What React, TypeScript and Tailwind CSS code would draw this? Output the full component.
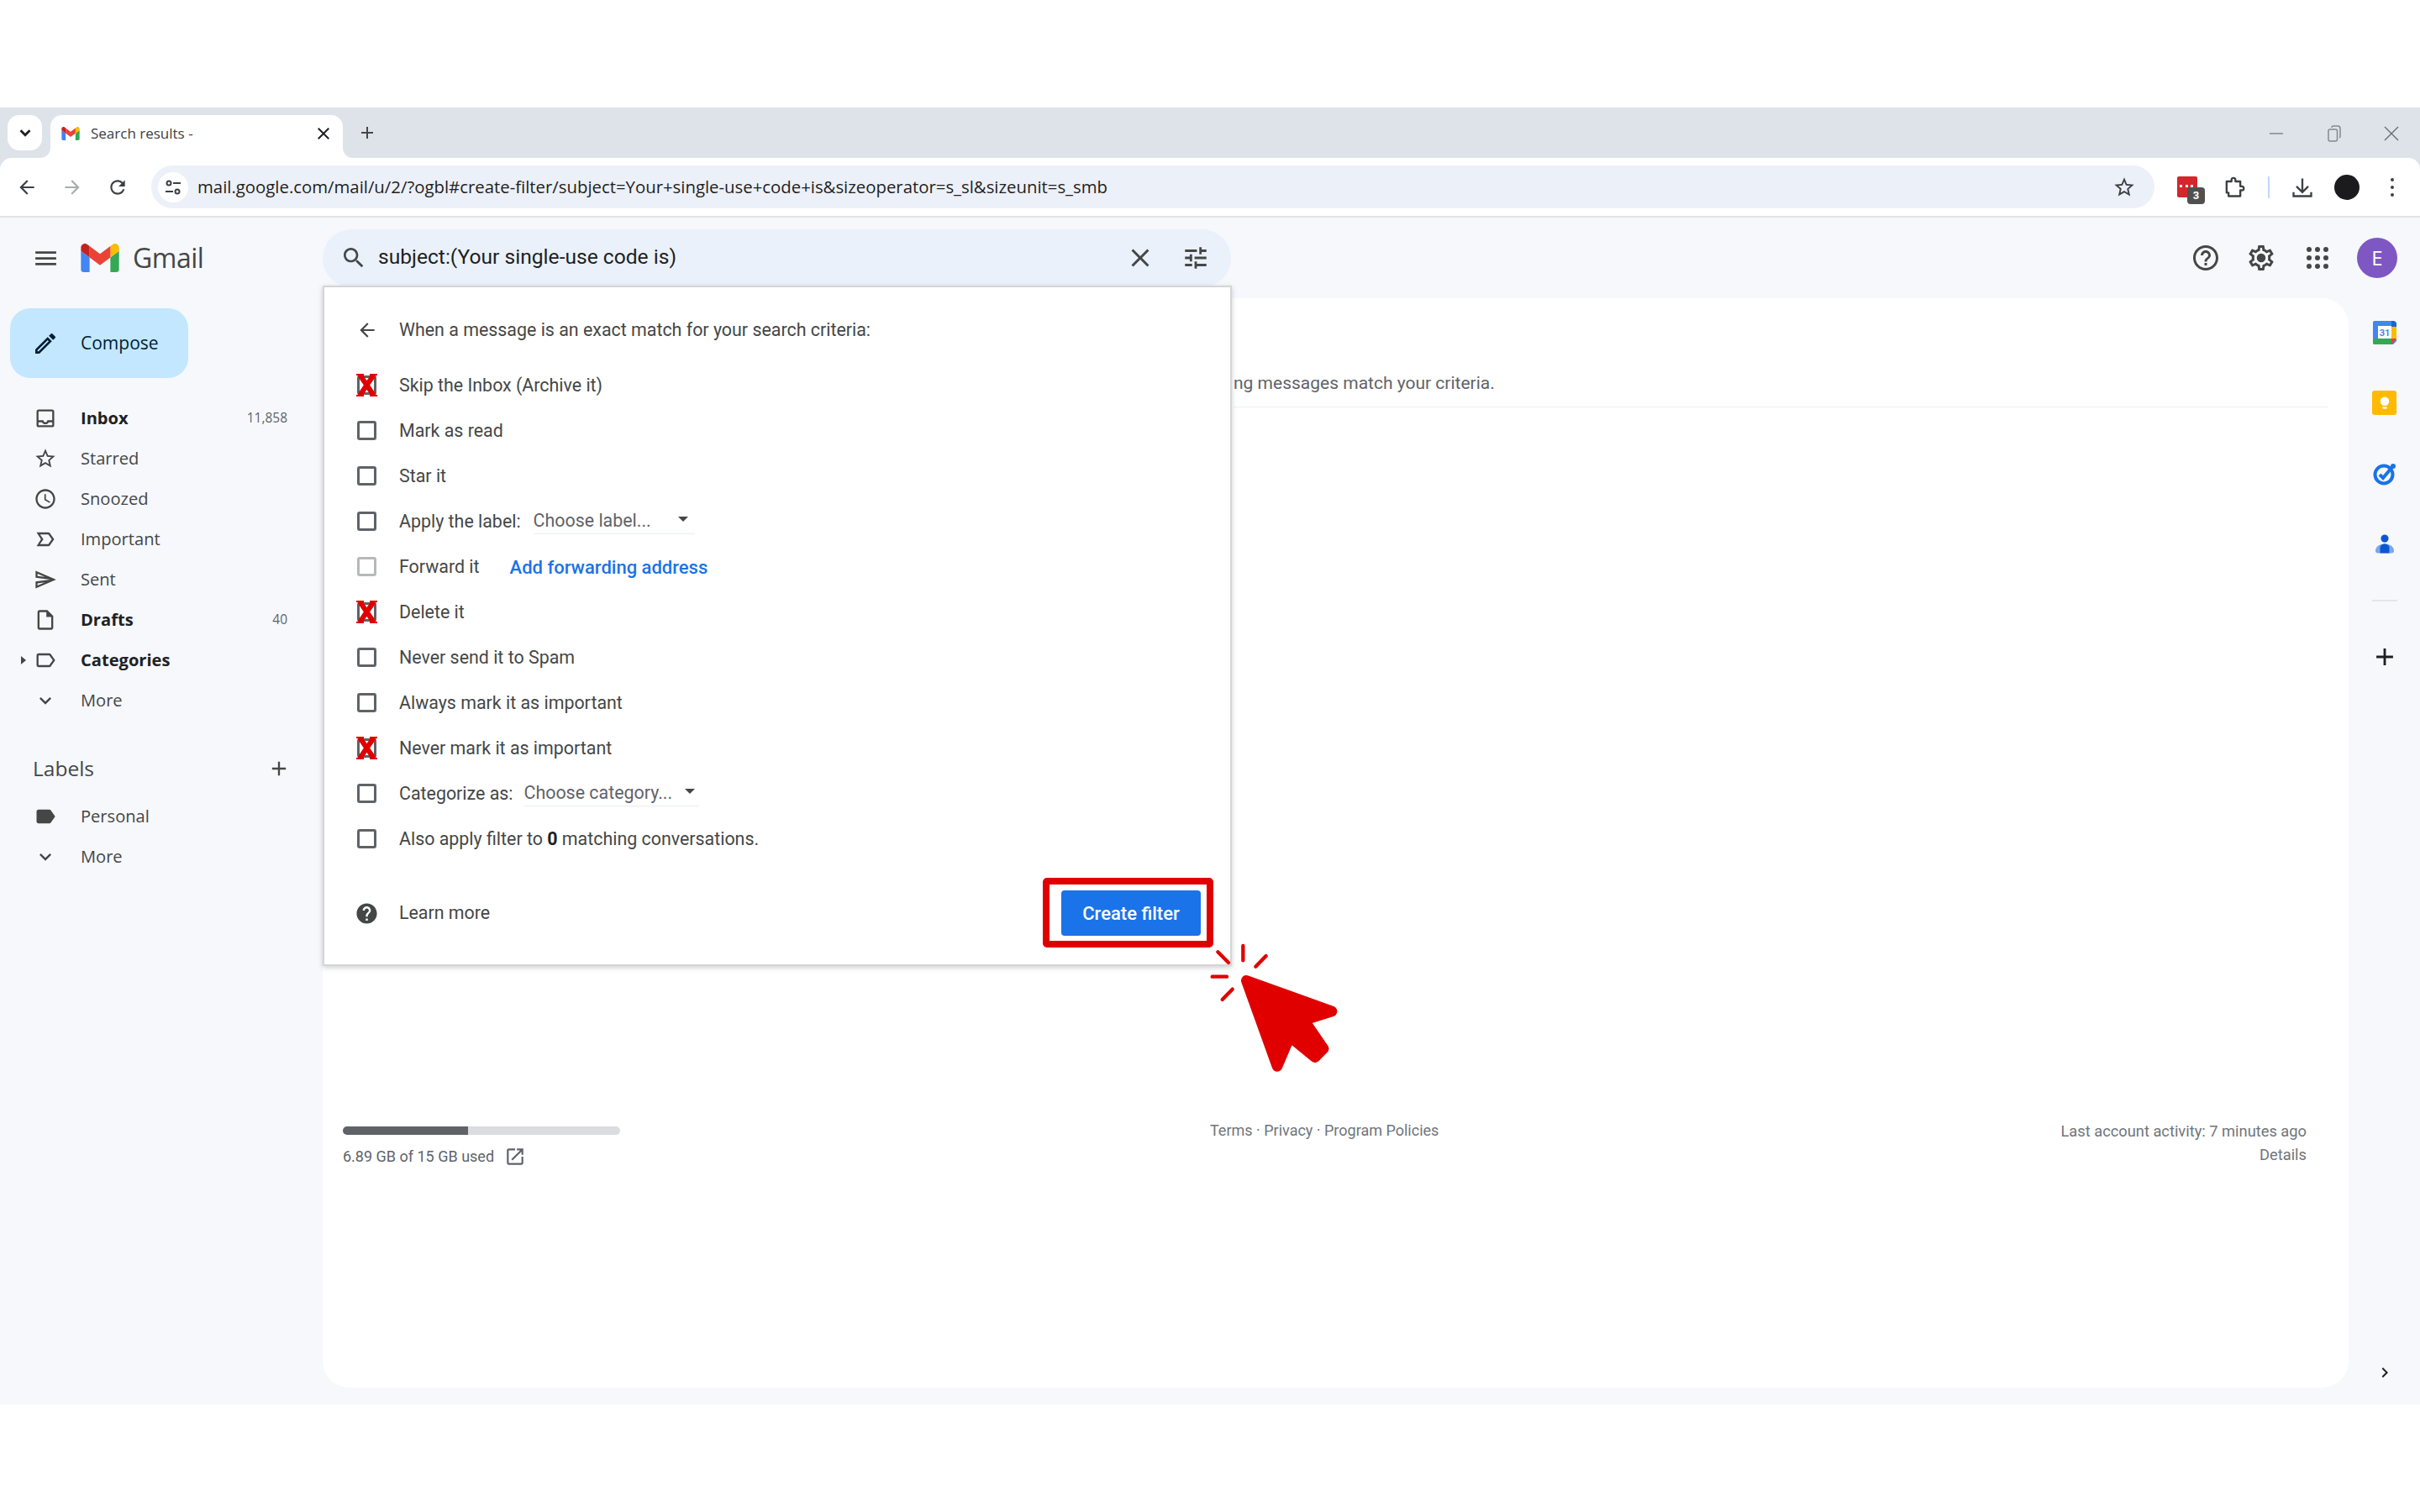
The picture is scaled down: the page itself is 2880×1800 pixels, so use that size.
import React from "react";

const P: Record<string, string> = {
  menu: "M3 18h18v-2H3v2zm0-5h18v-2H3v2zm0-7v2h18V6H3z",
  search: "M15.5 14h-.79l-.28-.27C15.41 12.59 16 11.11 16 9.5 16 5.91 13.09 3 9.5 3S3 5.91 3 9.5 5.91 16 9.5 16c1.61 0 3.09-.59 4.23-1.57l.27.28v.79l5 4.99L20.49 19l-4.99-5zm-6 0C7.01 14 5 11.99 5 9.5S7.01 5 9.5 5 14 7.01 14 9.5 11.99 14 9.5 14z",
  close: "M19 6.41L17.59 5 12 10.59 6.41 5 5 6.41 10.59 12 5 17.59 6.41 19 12 13.41 17.59 19 19 17.59 13.41 12z",
  tune: "M3 17v2h6v-2H3zM3 5v2h10V5H3zm10 16v-2h8v-2h-8v-2h-2v6h2zM7 9v2H3v2h4v2h2V9H7zm14 4v-2H11v2h10zm-6-4h2V7h4V5h-4V3h-2v6z",
  back: "M20 11H7.83l5.59-5.59L12 4l-8 8 8 8 1.41-1.41L7.83 13H20v-2z",
  forward: "M12 4l-1.41 1.41L16.17 11H4v2h12.17l-5.58 5.59L12 20l8-8z",
  refresh: "M17.65 6.35C16.2 4.9 14.21 4 12 4c-4.42 0-7.99 3.58-7.99 8s3.57 8 7.99 8c3.73 0 6.84-2.55 7.73-6h-2.08c-.82 2.33-3.04 4-5.65 4-3.31 0-6-2.69-6-6s2.69-6 6-6c1.66 0 3.14.69 4.22 1.78L13 11h7V4l-2.35 2.35z",
  star: "M22 9.24l-7.19-.62L12 2 9.19 8.63 2 9.24l5.46 4.73L5.82 21 12 17.27 18.18 21l-1.63-7.03L22 9.24zM12 15.4l-3.76 2.27 1-4.28-3.32-2.88 4.38-.38L12 6.1l1.71 4.04 4.38.38-3.32 2.88 1 4.28L12 15.4z",
  help: "M11 18h2v-2h-2v2zm1-16C6.48 2 2 6.48 2 12s4.48 10 10 10 10-4.48 10-10S17.52 2 12 2zm0 18c-4.41 0-8-3.59-8-8s3.59-8 8-8 8 3.59 8 8-3.59 8-8 8zm0-14c-2.21 0-4 1.79-4 4h2c0-1.1.9-2 2-2s2 .9 2 2c0 2-3 1.75-3 5h2c0-2.25 3-2.5 3-5 0-2.21-1.79-4-4-4z",
  gear: "M19.43 12.98c.04-.32.07-.64.07-.98 0-.34-.03-.66-.07-.98l2.11-1.65c.19-.15.24-.42.12-.64l-2-3.46c-.09-.16-.26-.25-.44-.25-.06 0-.12.01-.17.03l-2.49 1c-.52-.4-1.08-.73-1.69-.98l-.38-2.65C14.46 2.18 14.25 2 14 2h-4c-.25 0-.46.18-.49.42l-.38 2.65c-.61.25-1.17.59-1.69.98l-2.49-1c-.06-.02-.12-.03-.18-.03-.17 0-.34.09-.43.25l-2 3.46c-.13.22-.07.49.12.64l2.11 1.65c-.04.32-.07.65-.07.98 0 .33.03.66.07.98l-2.11 1.65c-.19.15-.24.42-.12.64l2 3.46c.09.16.26.25.44.25.06 0 .12-.01.17-.03l2.49-1c.52.4 1.08.73 1.69.98l.38 2.65c.03.24.24.42.49.42h4c.25 0 .46-.18.49-.42l.38-2.65c.61-.25 1.17-.59 1.69-.98l2.49 1c.06.02.12.03.18.03.17 0 .34-.09.43-.25l2-3.46c.12-.22.07-.49-.12-.64l-2.11-1.65zm-1.98-1.71c.04.31.05.52.05.73 0 .21-.02.43-.05.73l-.14 1.13.89.7 1.08.84-.7 1.21-1.27-.51-1.04-.42-.9.68c-.43.32-.84.56-1.25.73l-1.06.43-.16 1.13-.2 1.35h-1.4l-.19-1.35-.16-1.13-1.06-.43c-.43-.18-.83-.41-1.23-.71l-.91-.7-1.06.43-1.27.51-.7-1.21 1.08-.84.89-.7-.14-1.13c-.03-.31-.05-.54-.05-.74s.02-.43.05-.73l.14-1.13-.89-.7-1.08-.84.7-1.21 1.27.51 1.04.42.9-.68c.43-.32.84-.56 1.25-.73l1.06-.43.16-1.13.2-1.35h1.39l.19 1.35.16 1.13 1.06.43c.43.18.83.41 1.23.71l.91.7 1.06-.43 1.27-.51.7 1.21-1.07.85-.89.7.14 1.13zM12 8.5a3.5 3.5 0 1 0 0 7 3.5 3.5 0 0 0 0-7z",
  inbox: "M19 3H5c-1.1 0-2 .9-2 2v14c0 1.1.9 2 2 2h14c1.1 0 2-.9 2-2V5c0-1.1-.9-2-2-2zm0 16H5v-3h3.56c.69 1.19 1.97 2 3.45 2s2.75-.81 3.45-2H19v3zm0-5h-4.99c0 1.1-.9 2-2 2s-2-.9-2-2H5V5h14v9z",
  clock: "M11.99 2C6.47 2 2 6.48 2 12s4.47 10 9.99 10C17.52 22 22 17.52 22 12S17.52 2 11.99 2zM12 20c-4.42 0-8-3.58-8-8s3.58-8 8-8 8 3.58 8 8-3.58 8-8 8zm.5-13H11v6l5.25 3.15.75-1.23-4.5-2.67z",
  important: "M15 19H3l4.5-7L3 5h12c.65 0 1.26.31 1.63.84L21 12l-4.37 6.16c-.37.52-.98.84-1.63.84zm-8.5-2H15l3.5-5L15 7H6.5l3.5 5-3.5 5z",
  send: "M4.01 6.03l7.51 3.22-7.52-1 .01-2.22m7.5 8.72L4 17.97v-2.22l7.51-1M2.01 3L2 10l15 2-15 2 .01 7L23 12 2.01 3z",
  draft: "M14 2H6c-1.1 0-1.99.9-1.99 2L4 20c0 1.1.89 2 1.99 2H18c1.1 0 2-.9 2-2V8l-6-6zM6 20V4h7v5h5v11H6z",
  label: "M17.63 5.84C17.27 5.33 16.67 5 16 5L5 5.01C3.9 5.01 3 5.9 3 7v10c0 1.1.9 1.99 2 1.99L16 19c.67 0 1.27-.33 1.63-.84L22 12l-4.37-6.16zM16 17H5V7h11l3.55 5L16 17z",
  labelFill: "M17.63 5.84C17.27 5.33 16.67 5 16 5L5 5.01C3.9 5.01 3 5.9 3 7v10c0 1.1.9 1.99 2 1.99L16 19c.67 0 1.27-.33 1.63-.84L22 12l-4.37-6.16z",
  more: "M16.59 8.59L12 13.17 7.41 8.59 6 10l6 6 6-6z",
  open: "M19 19H5V5h7V3H5c-1.11 0-2 .9-2 2v14c0 1.1.89 2 2 2h14c1.1 0 2-.9 2-2v-7h-2v7zM14 3v2h3.59l-9.83 9.83 1.41 1.41L19 6.41V10h2V3h-7z",
  helpFill: "M12 2C6.48 2 2 6.48 2 12s4.48 10 10 10 10-4.48 10-10S17.52 2 12 2zm1 17h-2v-2h2v2zm2.07-7.75l-.9.92C13.45 12.9 13 13.5 13 15h-2v-.5c0-1.1.45-2.1 1.17-2.83l1.24-1.26c.37-.36.59-.86.59-1.41 0-1.1-.9-2-2-2s-2 .9-2 2H8c0-2.21 1.79-4 4-4s4 1.79 4 4c0 .88-.36 1.68-.93 2.25z",
  edit: "M14.06 9.02l.92.92L5.92 19H5v-.92l9.06-9.06M17.66 3c-.25 0-.51.1-.7.29l-1.83 1.83 3.75 3.75 1.83-1.83c.39-.39.39-1.02 0-1.41l-2.34-2.34c-.2-.2-.45-.29-.71-.29zm-3.6 3.19L3 17.25V21h3.75L17.81 9.94l-3.75-3.75z",
  plus: "M19 13h-6v6h-2v-6H5v-2h6V5h2v6h6v2z",
  chevR: "M8.59 16.59L13.17 12 8.59 7.41 10 6l6 6-6 6z",
};

function I({ n, s = 24, c = "text-[#444746]" }: { n: string; s?: number; c?: string }) {
  return (
    <svg viewBox="0 0 24 24" width={s} height={s} className={`shrink-0 fill-current ${c}`}>
      <path d={P[n]} />
    </svg>
  );
}

function GmailM({ w, h }: { w: number; h: number }) {
  return (
    <svg viewBox="52 42 88 66" width={w} height={h} className="shrink-0">
      <path fill="#4285f4" d="M58 108h14V74L52 59v43c0 3.32 2.69 6 6 6" />
      <path fill="#34a853" d="M120 108h14c3.32 0 6-2.69 6-6V59l-20 15" />
      <path fill="#fbbc04" d="M120 48v26l20-15v-8c0-7.42-8.47-11.65-14.4-7.2" />
      <path fill="#ea4335" d="M72 74V48l24 18 24-18v26L96 92" />
      <path fill="#c5221f" d="M52 51v8l20 15V48l-5.6-4.2c-5.94-4.45-14.4-.22-14.4 7.2" />
    </svg>
  );
}

function Nav({ icon, text, bold, count, caret, gray }: { icon: string; text: string; bold?: boolean; count?: string; caret?: boolean; gray?: boolean }) {
  return (
    <div className="relative flex h-[48px] w-[342px] items-center [font-family:'Open_Sans',sans-serif] text-[#444746]">
      {caret && <span className="absolute left-[25px] top-[19px] h-0 w-0 border-y-[5px] border-l-[6px] border-y-transparent border-l-[#444746]" />}
      <span className="flex w-[96px] justify-center pl-[12px]">
        <I n={icon} s={gray ? 26 : 28} />
      </span>
      <span className={`flex-1 text-[20.1px] ${bold ? "font-bold text-[#202124]" : ""}`}>{text}</span>
      {count && <span className="text-[15.5px] text-[#5f6368]">{count}</span>}
    </div>
  );
}

function Box({ light }: { light?: boolean }) {
  return <span className={`block h-[23px] w-[23px] rounded-[3px] border-[3px] ${light ? "border-[#b6b8ba]" : "border-[#5f6368]"}`} />;
}

function XBox() {
  return (
    <span className="relative block h-[23px] w-[23px]">
      <span className="block h-[23px] w-[23px] rounded-[3px] border-[3px] border-[#5f6368]" />
      <svg viewBox="0 0 27 27" width={27} height={27} className="absolute -left-[2px] -top-[2px]" fill="none" stroke="#e00000">
        <path d="M5 1L22 26M22 1L5 26" strokeWidth="6" />
        <path d="M1 1h9M17 1h9M1 26h9M17 26h9" strokeWidth="2" />
      </svg>
    </span>
  );
}

function Row({ children, mark }: { children: React.ReactNode; mark?: React.ReactNode }) {
  return (
    <div className="flex h-[54px] items-center text-[21.4px] text-[#444746]">
      <span className="flex w-[50px] shrink-0 pb-[2px]">{mark ?? <Box />}</span>
      {children}
    </div>
  );
}

function Select({ w, text, ml, caretR }: { w: number; text: string; ml: number; caretR: number }) {
  return (
    <span className="relative flex h-[30px] items-center border-b border-[#e8eeee] text-[#5f6368]" style={{ width: w, marginLeft: ml }}>
      {text}
      <span className="absolute top-[9px] h-0 w-0 border-x-[6px] border-t-[6px] border-x-transparent border-t-[#444746]" style={{ right: caretR }} />
    </span>
  );
}

export default function App() {
  return (
    <div className="flex h-[1800px] w-[2880px] flex-col overflow-hidden bg-white [font-family:Roboto,sans-serif]">
      <div className="h-[128px]" />

      {/* tab strip */}
      <div className="flex h-[60px] items-end bg-[#dee3ea] pl-[9px]">
        <div className="mb-[9px] flex h-[42px] w-[41px] items-center justify-center rounded-[14px] bg-white">
          <svg viewBox="0 0 24 24" width={22} height={22} className="fill-none stroke-[#1f1f1f] stroke-[3]"><path d="M6 9l6 6 6-6" /></svg>
        </div>
        <div className="relative ml-[10px] flex h-[51px] w-[348px] items-center rounded-t-[14px] bg-white pb-[7px] pl-[13px]">
          <span className="absolute -left-[12px] bottom-0 h-[12px] w-[12px] bg-white"><span className="block h-full w-full rounded-br-[12px] bg-[#dee3ea]" /></span>
          <span className="absolute -right-[12px] bottom-0 h-[12px] w-[12px] bg-white"><span className="block h-full w-full rounded-bl-[12px] bg-[#dee3ea]" /></span>
          <GmailM w={22} h={16} />
          <span className="ml-[13px] flex-1 [font-family:'Open_Sans',sans-serif] text-[17px] text-[#3c4043]">Search results -</span>
          <span className="mr-[11px]"><I n="close" s={24} c="text-[#202124]" /></span>
        </div>
        <div className="ml-[17px] mb-[18px]"><I n="plus" s={24} c="text-[#444746]" /></div>
        <div className="mb-[19px] ml-auto flex items-center">
          <span className="block h-[2px] w-[16px] bg-[#9a9ea3]" />
          <span className="ml-[53px] block"><svg viewBox="0 0 16 20" width={16} height={20} className="fill-none stroke-[#85898e] stroke-[1.5]"><rect x="1" y="5" width="10.500" height="14" rx="2" /><path d="M5 3V3a2 2 0 0 1 2-2h5a3 3 0 0 1 3 3v9a2 2 0 0 1-1 2" /></svg></span>
          <span className="ml-[50px] mr-[24px] block"><svg viewBox="0 0 20 20" width={20} height={20} className="fill-none stroke-[#6a6e73] stroke-[1.4]"><path d="M2 2l16 16M18 2L2 18" /></svg></span>
        </div>
      </div>

      {/* toolbar */}
      <div className="bg-[#dee3ea]">
        <div className="flex h-[69px] items-center rounded-t-[14px] bg-white pl-[19px] pr-[19px]">
          <I n="back" s={26} c="text-[#3c4043]" />
          <span className="ml-[28px]"><I n="forward" s={26} c="text-[#a9acb0]" /></span>
          <span className="ml-[28px]"><I n="refresh" s={26} c="text-[#3c4043]" /></span>
          <div className="ml-[27px] flex h-[51px] w-[2384px] items-center rounded-full bg-[#ecf0f8] pl-[8px] pr-[22px]">
            <span className="flex h-[36px] w-[36px] items-center justify-center rounded-full bg-white">
              <svg viewBox="0 0 20 20" width={20} height={20} className="fill-none stroke-[#3c4043] stroke-[2]"><circle cx="5" cy="5" r="2.500" /><path d="M10 5h9M1 15h9" /><circle cx="15" cy="15" r="2.500" /></svg>
            </span>
            <span className="ml-[11px] flex-1 [font-family:'Open_Sans',sans-serif] text-[20.35px] text-[#1f1f1f]">mail.google.com/mail/u/2/?ogbl#create-filter/subject=Your+single-use+code+is&amp;sizeoperator=s_sl&amp;sizeunit=s_smb</span>
            <I n="star" s={28} c="text-[#3c4043]" />
          </div>
          <span className="relative ml-[27px] block h-[25px] w-[24px] rounded-[2px] bg-[#d3272b]">
            <span className="absolute left-[3px] top-[10px] block h-[4px] w-[16px] border-t-[3px] border-dotted border-white" />
            <span className="absolute -right-[9px] top-[13px] flex h-[20px] w-[21px] items-center justify-center rounded-[4px] bg-[#505050] text-[13px] font-bold text-white">3</span>
          </span>
          <span className="ml-[29px]">
            <svg viewBox="0 0 24 24" width={28} height={28} className="fill-none stroke-[#3c4043] stroke-[2] [stroke-linejoin:round]"><path d="M5 6h5V4.500a2 2 0 0 1 4 0V6h5v5h1.500a2 2 0 0 1 0 4H19v6H7v-3.500L5 17.500z" /></svg>
          </span>
          <span className="ml-[27px] block h-[26px] w-[2px] bg-[#c4d7f5]" />
          <span className="ml-[25px]">
            <svg viewBox="0 0 24 24" width={28} height={28} className="fill-none stroke-[#3c4043] stroke-[2]"><path d="M12 3v14M6 11l6 6 6-6M3 17v4h18v-4" /></svg>
          </span>
          <span className="ml-[24px] block h-[30px] w-[30px] rounded-full bg-[#1b1b1d]" />
          <span className="ml-[37px] flex flex-col gap-[5px]">
            <span className="block h-[4px] w-[4px] rounded-full bg-[#3c4043]" />
            <span className="block h-[4px] w-[4px] rounded-full bg-[#3c4043]" />
            <span className="block h-[4px] w-[4px] rounded-full bg-[#3c4043]" />
          </span>
        </div>
      </div>
      <div className="h-[2px] bg-[#e3e3e3]" />

      {/* gmail page */}
      <div className="relative h-[1413px] bg-[#f6f8fc]">
        {/* header */}
        <div className="flex h-[96px] items-center">
          <span className="ml-[38px]"><I n="menu" s={33} c="text-[#444746]" /></span>
          <span className="ml-[25px]"><GmailM w={46} h={34} /></span>
          <span className="ml-[16px] w-[226px] [font-family:'Open_Sans',sans-serif] text-[32px] tracking-[-0.5px] text-[#444746]">Gmail</span>
          <div className="flex h-[69px] w-[1081px] items-center rounded-full bg-[#eaf1fb] pl-[21px] pr-[25px]">
            <I n="search" s={32} c="text-[#444746]" />
            <span className="-mt-[2px] ml-[13px] flex-1 text-[24.6px] text-[#1f1f1f]">subject:(Your single-use code is)</span>
            <I n="close" s={36} c="text-[#444746]" />
            <span className="ml-[31px]"><I n="tune" s={34} c="text-[#444746]" /></span>
          </div>
          <div className="ml-auto flex items-center pr-[27px]">
            <I n="help" s={36} c="text-[#444746]" />
            <span className="ml-[30px] flex"><I n="gear" s={36} c="text-[#444746]" /></span>
            <span className="ml-[36px] grid grid-cols-3 gap-[4px]">
              {Array.from({ length: 9 }).map((_, i) => (
                <span key={i} className="block h-[6px] w-[6px] rounded-full bg-[#444746]" />
              ))}
            </span>
            <span className="ml-[34px] flex h-[48px] w-[48px] items-center justify-center rounded-full bg-[#7e57c2] [font-family:'Open_Sans',sans-serif] text-[24px] text-white">E</span>
          </div>
        </div>

        <div className="flex h-[1297px]">
          {/* sidebar */}
          <aside className="w-[384px] shrink-0 pt-[12px]">
            <div className="ml-[12px] flex h-[83px] w-[212px] items-center rounded-[24px] bg-[#c2e7ff] pl-[26px]">
              <I n="edit" s={32} c="text-[#001d35]" />
              <span className="ml-[26px] [font-family:'Open_Sans',sans-serif] text-[21px] text-[#001d35]">Compose</span>
            </div>
            <div className="mt-[24px]">
              <Nav icon="inbox" text="Inbox" bold count="11,858" />
              <Nav icon="star" text="Starred" />
              <Nav icon="clock" text="Snoozed" />
              <Nav icon="important" text="Important" />
              <Nav icon="send" text="Sent" />
              <Nav icon="draft" text="Drafts" bold count="40" />
              <Nav icon="label" text="Categories" bold caret />
              <Nav icon="more" text="More" />
            </div>
            <div className="mt-[33px] flex h-[48px] w-[346px] items-center justify-between pl-[39px] [font-family:'Open_Sans',sans-serif] text-[24.5px] text-[#444746]">
              Labels
              <I n="plus" s={28} c="text-[#444746]" />
            </div>
            <div className="mt-[9px]">
              <Nav icon="labelFill" text="Personal" />
              <Nav icon="more" text="More" />
            </div>
          </aside>

          {/* content */}
          <main className="w-[2411px] shrink-0 rounded-[32px] bg-white pt-[86px]">
            <p className="ml-[1084px] h-[30px] text-[21px] leading-[30px] text-[#5f6368]">ng messages match your criteria.</p>
            <div className="ml-[1084px] mt-[13px] h-[1px] w-[1303px] bg-[#eceef1]" />
            <div className="mt-[856px] flex pl-[24px] pr-[50px] text-[18px] text-[#70757a]">
              <div className="w-[1032px]">
                <div className="h-[10px] w-[330px] overflow-hidden rounded-full bg-[#dadce0]">
                  <div className="h-full bg-[#5f6368]" style={{ width: "45%" }} />
                </div>
                <div className="mt-[12px] flex items-center">
                  <span className="text-[#5f6368]">6.89 GB of 15 GB used</span>
                  <span className="ml-[12px]"><I n="open" s={26} c="text-[#5f6368]" /></span>
                </div>
              </div>
              <div className="-mt-[9px]">Terms · Privacy · Program Policies</div>
              <div className="-mt-[8px] ml-auto text-right text-[18.3px] leading-[28px]">
                <div>Last account activity: 7 minutes ago</div>
                <div>Details</div>
              </div>
            </div>
          </main>

          {/* right rail */}
          <div className="flex flex-1 flex-col items-center pt-[27px]">
            <svg viewBox="0 0 28 28" width={28} height={28}>
              <path d="M2 0h22l4 4v20l-4 4H2a2 2 0 0 1-2-2V2a2 2 0 0 1 2-2z" fill="#4285f4" />
              <path d="M22 0h2a4 4 0 0 1 4 4v3h-6z" fill="#1967d2" />
              <path d="M22 7h6v15h-6z" fill="#fbbc04" />
              <path d="M0 21h22v7H2a2 2 0 0 1-2-2z" fill="#34a853" />
              <path d="M6 6h16v15H6z" fill="#fff" />
              <path d="M22 21h6l-6 7z" fill="#ea4335" />
              <text x="14" y="18" textAnchor="middle" fontSize="11" fontWeight="700" fill="#4285f4" fontFamily="Roboto, sans-serif">31</text>
            </svg>
            <span className="mt-[55px] flex h-[29px] w-[29px] items-center justify-center rounded-[3px] bg-[#ffba00]">
              <svg viewBox="0 0 16 18" width={14} height={16} className="fill-white"><circle cx="8" cy="6.500" r="6" /><rect x="5" y="14" width="6" height="2.500" /></svg>
            </span>
            <svg viewBox="0 0 28 28" width={28} height={28} className="mt-[56px]">
              <circle cx="13" cy="15" r="10.500" fill="none" stroke="#1a73e8" strokeWidth="4" />
              <path d="M8 15l4 4 11-13" fill="none" stroke="#1a73e8" strokeWidth="4" />
              <circle cx="24" cy="5" r="3" fill="#1a73e8" />
            </svg>
            <svg viewBox="0 0 24 26" width={22} height={25} className="mt-[57px]">
              <circle cx="12" cy="6" r="5" fill="#0b57d0" />
              <path d="M3 25a3 3 0 0 1-3-3c0-6 6-9 12-9s12 3 12 9a3 3 0 0 1-3 3z" fill="#7aa7ec" />
              <path d="M6 25V18c0-3 3-5 6-5s6 2 6 5v7z" fill="#0b57d0" />
            </svg>
            <span className="mt-[54px] block h-[2px] w-[30px] bg-[#e3e5e8]" />
            <span className="mt-[49px] block"><I n="plus" s={34} c="text-[#1f1f1f]" /></span>
            <span className="mt-[823px] block"><I n="chevR" s={24} c="text-[#1f1f1f]" /></span>
          </div>
        </div>

        {/* create-filter dialog */}
        <div className="absolute left-[384px] top-[81px] h-[810px] w-[1082px] border-2 border-[#d4d5d7] bg-white pl-[39px] pr-[35px] pt-[24px] shadow-[0_2px_6px_rgba(60,64,67,0.25)]">
          <div className="flex h-[54px] items-center text-[21.4px] text-[#444746]">
            <span className="flex w-[50px] shrink-0"><I n="back" s={26} c="text-[#444746] -ml-[1px]" /></span>
            When a message is an exact match for your search criteria:
          </div>
          <div className="mt-[12px]">
            <Row mark={<XBox />}>Skip the Inbox (Archive it)</Row>
            <Row>Mark as read</Row>
            <Row>Star it</Row>
            <Row>Apply the label:<Select w={192} text="Choose label..." ml={15} caretR={8} /></Row>
            <Row mark={<Box light />}>Forward it<span className="ml-[36px] text-[22px] font-medium text-[#1a73e8]">Add forwarding address</span></Row>
            <Row mark={<XBox />}>Delete it</Row>
            <Row>Never send it to Spam</Row>
            <Row>Always mark it as important</Row>
            <Row mark={<XBox />}>Never mark it as important</Row>
            <Row>Categorize as:<Select w={208} text="Choose category..." ml={13} caretR={5} /></Row>
            <Row>Also apply filter to&nbsp;<b className="font-bold text-[#202124]">0</b>&nbsp;matching conversations.</Row>
          </div>
          <div className="mt-[34px] flex h-[54px] items-center text-[21.4px] text-[#444746]">
            <span className="flex w-[50px] shrink-0"><I n="helpFill" s={29} c="text-[#444746] -ml-[3px]" /></span>
            <span className="flex-1">Learn more</span>
            <button className="h-[54px] w-[166px] rounded-[4px] bg-[#1a73e8] text-[22px] font-medium text-white">Create filter</button>
          </div>
        </div>

        {/* red annotation */}
        <div className="absolute left-[1241px] top-[786px] h-[83px] w-[203px] rounded-[5px] border-[8px] border-[#e00000]" />
        <svg viewBox="0 0 1260 840" width={420} height={280} className="absolute left-[1200px] top-[761px]">
          <g stroke="#e00000" strokeWidth="13" strokeLinecap="round" fill="none">
            <path d="M748 340L786 378M838 318V370M920 354L883 392M728 428H780M800 473L764 510" />
          </g>
          <path d="M850 442L1155 552L1055 583L1125 685L1095 716L1005 642L960 748Z" fill="#e00000" stroke="#e00000" strokeWidth="38" strokeLinejoin="round" />
        </svg>
      </div>
    </div>
  );
}
